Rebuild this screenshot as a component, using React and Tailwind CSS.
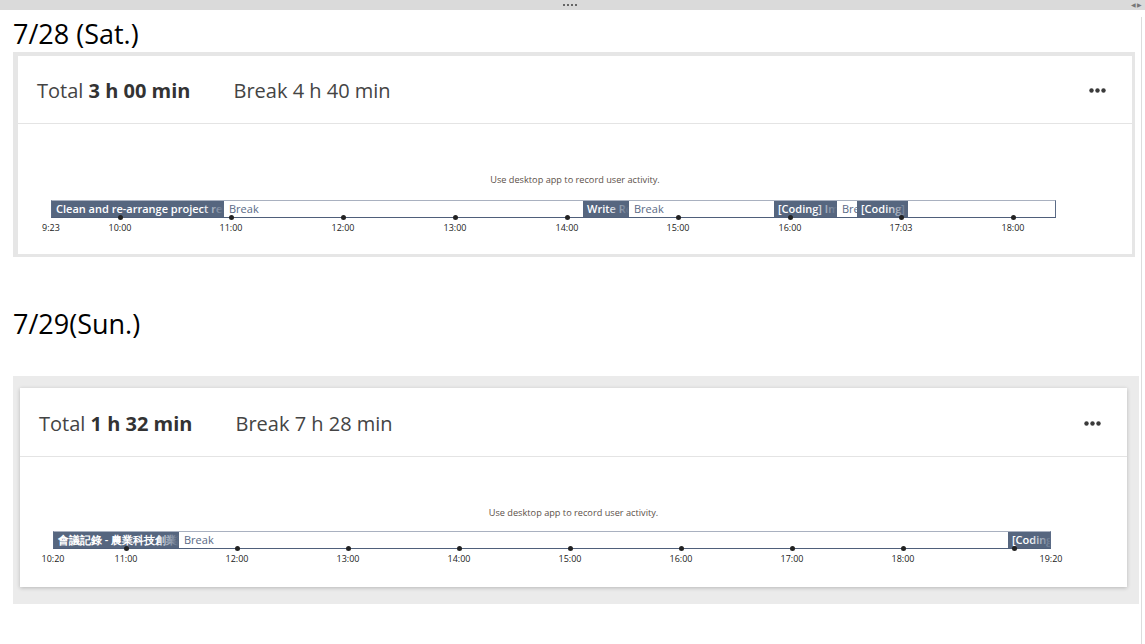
const DARK = 'bg-[#56667f]';

const day1 = {
  width: 1005,
  segments: [
    { s: 0, e: 172, dark: true, text: 'Clean and re-arrange project related files' },
    { s: 172, e: 531, text: 'Break' },
    { s: 531, e: 577, dark: true, text: 'Write Report' },
    { s: 577, e: 722, text: 'Break' },
    { s: 722, e: 785, dark: true, text: '[Coding] Implement' },
    { s: 785, e: 805, text: 'Break' },
    { s: 805, e: 856, dark: true, text: '[Coding]' },
    { s: 856, e: 1005, text: '' },
  ],
  ticks: [
    { x: 0, label: '9:23', dot: false },
    { x: 69, label: '10:00' },
    { x: 180, label: '11:00' },
    { x: 292, label: '12:00' },
    { x: 404, label: '13:00' },
    { x: 516, label: '14:00' },
    { x: 627, label: '15:00' },
    { x: 739, label: '16:00' },
    { x: 850, label: '17:03' },
    { x: 962, label: '18:00' },
  ],
};

const day2 = {
  width: 998,
  segments: [
    { s: 0, e: 125, dark: true, text: '會議記錄 - 農業科技創業計畫' },
    { s: 125, e: 954, text: 'Break' },
    { s: 954, e: 998, dark: true, text: '[Coding]' },
  ],
  ticks: [
    { x: 0, label: '10:20', dot: false },
    { x: 73, label: '11:00' },
    { x: 184, label: '12:00' },
    { x: 295, label: '13:00' },
    { x: 406, label: '14:00' },
    { x: 517, label: '15:00' },
    { x: 628, label: '16:00' },
    { x: 739, label: '17:00' },
    { x: 850, label: '18:00' },
    { x: 961, label: '' },
    { x: 998, label: '19:20', dot: false },
  ],
};

function Timeline({ data }) {
  return (
    <div className="relative ml-[33px] h-[40px]" style={{ width: data.width }}>
      <div className="flex h-[18px] border border-[#5b6b86] border-t-[#a9b1c0] border-b-[#4f5f7a] overflow-hidden bg-white">
        {data.segments.map((seg, i) => (
          <div
            key={i}
            className={
              seg.dark
                ? `${DARK} relative shrink-0 overflow-hidden whitespace-nowrap pl-[4px] text-[11px] leading-[15px] font-semibold text-white`
                : 'relative shrink-0 overflow-hidden whitespace-nowrap pl-[5px] text-[11px] leading-[15px] text-[#5a6a86]'
            }
            style={{ width: seg.e - seg.s }}
          >
            {seg.text}
            {seg.dark && (
              <div className="absolute right-0 top-0 h-full w-[22px] bg-gradient-to-l from-[#56667f] to-transparent" />
            )}
          </div>
        ))}
      </div>
      {data.ticks.map((t, i) => (
        <div key={i}>
          {t.dot !== false && (
            <div className="absolute top-[15px] h-[5px] w-[5px] rounded-full bg-[#222]" style={{ left: t.x - 2.5 }} />
          )}
          {t.label && (
            <div
              className="absolute top-[22px] -translate-x-1/2 whitespace-nowrap text-[9px] leading-[12px] text-[#222]"
              style={{ left: t.x }}
            >
              {t.label}
            </div>
          )}
        </div>
      ))}
    </div>
  );
}

function Dots() {
  return (
    <svg width="17" height="5" viewBox="0 0 17 5">
      <circle cx="2.5" cy="2.5" r="2.2" fill="#3a3a3a" />
      <circle cx="8.5" cy="2.5" r="2.2" fill="#3a3a3a" />
      <circle cx="14.5" cy="2.5" r="2.2" fill="#3a3a3a" />
    </svg>
  );
}

function CardBody({ total, brk, data, headerH, barGap }) {
  return (
    <>
      <div className={`flex items-center justify-between border-b border-[#e4e4e4] pl-[19px] pr-[26px] pt-[2px] ${headerH}`}>
        <div className="flex items-center text-[20px] text-[#444]">
          <span>
            Total <span className="font-bold text-[#333]">{total}</span>
          </span>
          <span className="ml-[43px]">Break {brk}</span>
        </div>
        <Dots />
      </div>
      <div className="h-[130px] pt-[50px]">
        <p className="text-center text-[9.2px] leading-[12px] text-[#5c5049]">Use desktop app to record user activity.</p>
        <div className={barGap}>
          <Timeline data={data} />
        </div>
      </div>
    </>
  );
}

export default function App() {
  return (
    <div className="relative h-[644px] w-[1145px] overflow-hidden bg-white font-['Open_Sans',sans-serif]">
      <div className="relative flex h-[10px] items-center justify-center bg-[#dadada]">
        <div className="flex gap-[2px] -ml-[6px]">
          <span className="h-[2px] w-[2px] bg-[#666]" />
          <span className="h-[2px] w-[2px] bg-[#666]" />
          <span className="h-[2px] w-[2px] bg-[#666]" />
          <span className="h-[2px] w-[2px] bg-[#666]" />
        </div>
        <div className="absolute right-[3px] top-0 flex h-[10px] items-center gap-[1px] text-[6px] leading-none text-[#777]">
          <span>◀</span>
          <span>▶</span>
        </div>
      </div>

      <div className="h-[634px] w-[1142px] border-r border-[#dcdcdc] pl-[13px]">
        <h2 className="mt-[7px] text-[27px] leading-[34px] text-black">7/28 (Sat.)</h2>

        <div className="mt-[1px] w-[1122px] border-b-[3px] border-l-[5px] border-r-[3px] border-t-[4px] border-[#e6e6e6] bg-white">
          <CardBody total="3 h 00 min" brk="4 h 40 min" data={day1} headerH="h-[68px]" barGap="mt-[14px]" />
        </div>

        <h2 className="mt-[50px] text-[27px] leading-[34px] text-black">7/29(Sun.)</h2>

        <div className="mt-[35px] w-[1126px] bg-[#ebebeb] pb-[17px] pl-[7px] pr-[12px] pt-[12px]">
          <div className="bg-white shadow-[0_1px_4px_rgba(0,0,0,0.22)]">
            <CardBody total="1 h 32 min" brk="7 h 28 min" data={day2} headerH="h-[69px] pt-[3px]" barGap="mt-[12px]" />
          </div>
        </div>
      </div>
    </div>
  );
}
